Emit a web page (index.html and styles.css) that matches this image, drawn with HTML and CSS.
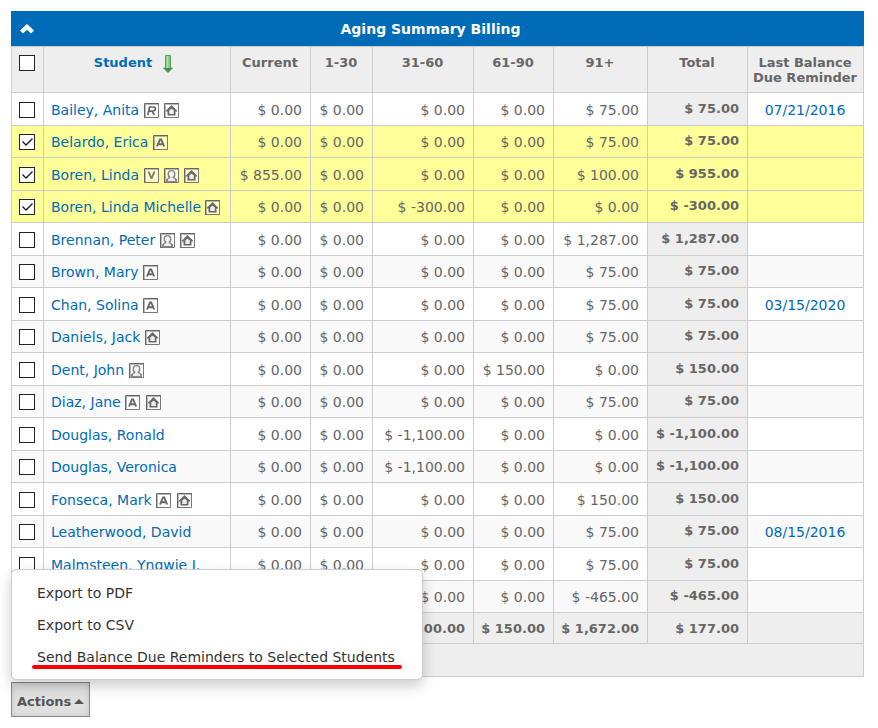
FILE: index.html
```html
<!DOCTYPE html>
<html lang="en">
<head>
<meta charset="utf-8">
<title>Aging Summary Billing</title>
<link rel="stylesheet" href="styles.css">
</head>
<body>
<svg class="symbols" aria-hidden="true">
  <symbol id="frame" viewBox="0 0 15 15">
    <path fill="#fff" fill-opacity=".45" d="M1 1h13v13H1z"/>
    <path fill="none" stroke="#666" d="M.5 15V.5H15"/>
    <path fill="none" stroke="#777" d="M14.500 1v13.500H1"/>
    <path fill="none" stroke="#888" stroke-opacity=".6" d="M1.500 14V1.500H14"/>
  </symbol>
  <symbol id="a" viewBox="0 0 15 15">
    <use href="#frame"/>
    <path fill="none" stroke="#666" stroke-width="1.900" d="M4 11.500 7 4.500h1.200l3 7M5.200 9.300h4.800"/>
  </symbol>
  <symbol id="r" viewBox="0 0 15 15">
    <use href="#frame"/>
    <path fill="none" stroke="#666" stroke-width="1.700" d="M3.800 12 5.600 4h4q2 0 1.700 2T8.800 8.200H5M8 8.200 10.500 12"/>
  </symbol>
  <symbol id="v" viewBox="0 0 15 15">
    <use href="#frame"/>
    <path fill="none" stroke="#777" stroke-width="1.900" d="M4.500 3.500 7.200 9.800h.6l2.700-6.300"/>
  </symbol>
  <symbol id="person" viewBox="0 0 15 15">
    <use href="#frame"/>
    <path fill="#888" d="M7.500 2Q11.500 2 11.500 6q0 2-1 3.500l2.500 1.800V14h-11v-2.700l2.500-1.800Q3.500 8 3.500 6 3.500 2 7.500 2z"/>
    <ellipse cx="7.500" cy="6" rx="2.500" ry="2.800" fill="#f2f2f2"/>
    <path fill="#ececec" d="M6.300 8h2.400v2l2.300 1.300V13H4v-1.700L6.300 10z"/>
  </symbol>
  <symbol id="home" viewBox="0 0 15 15">
    <use href="#frame"/>
    <path fill="#686868" d="M7.500 2 13 7.500v1h-1.500v4h-8v-4H2v-1z"/>
    <path fill="#eee" d="M5.300 7.200 7.500 5.800l2.300 1.400V11H5.300z"/>
  </symbol>
</svg>

<main class="report">
  <header class="report-bar">
    <button class="collapse" type="button" aria-label="Collapse">
      <svg viewBox="0 0 14 10" width="14" height="10" aria-hidden="true"><path fill="#fff" d="M7 0 14 6.500 11 9.500 7 5.800 3 9.500 0 6.500z"/></svg>
    </button>
    <h1>Aging Summary Billing</h1>
  </header>

  <table class="aging">
    <colgroup>
      <col class="c-check"><col><col class="c-current"><col class="c-30"><col class="c-60"><col class="c-90"><col class="c-91"><col class="c-total"><col class="c-last">
    </colgroup>
    <thead>
      <tr>
        <th><input type="checkbox" aria-label="Select all"></th>
        <th><a class="sort" href="#">Student
          <svg viewBox="0 0 10 18" width="10" height="18" aria-hidden="true"><path fill="#83c57e" stroke="#58a35a" d="M2.500.5h5v12.500h2L5 17.500.5 13h2z"/><path stroke="#b5dfae" stroke-width="1.500" d="M4.500 1v12"/><path fill="#438c4b" d="M1 13h8l-4 4.500z"/></svg></a></th>
        <th>Current</th><th>1-30</th><th>31-60</th><th>61-90</th><th>91+</th><th>Total</th><th>Last Balance Due Reminder</th>
      </tr>
    </thead>
    <tbody>
      <tr><td><input type="checkbox" aria-label="Select Bailey, Anita"></td><td><a href="#">Bailey, Anita</a> <svg class="tag"><use href="#r"/></svg> <svg class="tag"><use href="#home"/></svg></td><td>$ 0.00</td><td>$ 0.00</td><td>$ 0.00</td><td>$ 0.00</td><td>$ 75.00</td><td>$ 75.00</td><td><a href="#">07/21/2016</a></td></tr>
      <tr class="selected"><td><input type="checkbox" checked aria-label="Select Belardo, Erica"></td><td><a href="#">Belardo, Erica</a> <svg class="tag"><use href="#a"/></svg></td><td>$ 0.00</td><td>$ 0.00</td><td>$ 0.00</td><td>$ 0.00</td><td>$ 75.00</td><td>$ 75.00</td><td></td></tr>
      <tr class="selected"><td><input type="checkbox" checked aria-label="Select Boren, Linda"></td><td><a href="#">Boren, Linda</a> <svg class="tag"><use href="#v"/></svg> <svg class="tag"><use href="#person"/></svg> <svg class="tag"><use href="#home"/></svg></td><td>$ 855.00</td><td>$ 0.00</td><td>$ 0.00</td><td>$ 0.00</td><td>$ 100.00</td><td>$ 955.00</td><td></td></tr>
      <tr class="selected"><td><input type="checkbox" checked aria-label="Select Boren, Linda Michelle"></td><td><a href="#">Boren, Linda Michelle</a> <svg class="tag"><use href="#home"/></svg></td><td>$ 0.00</td><td>$ 0.00</td><td>$ -300.00</td><td>$ 0.00</td><td>$ 0.00</td><td>$ -300.00</td><td></td></tr>
      <tr><td><input type="checkbox" aria-label="Select Brennan, Peter"></td><td><a href="#">Brennan, Peter</a> <svg class="tag"><use href="#person"/></svg> <svg class="tag"><use href="#home"/></svg></td><td>$ 0.00</td><td>$ 0.00</td><td>$ 0.00</td><td>$ 0.00</td><td>$ 1,287.00</td><td>$ 1,287.00</td><td></td></tr>
      <tr><td><input type="checkbox" aria-label="Select Brown, Mary"></td><td><a href="#">Brown, Mary</a> <svg class="tag"><use href="#a"/></svg></td><td>$ 0.00</td><td>$ 0.00</td><td>$ 0.00</td><td>$ 0.00</td><td>$ 75.00</td><td>$ 75.00</td><td></td></tr>
      <tr><td><input type="checkbox" aria-label="Select Chan, Solina"></td><td><a href="#">Chan, Solina</a> <svg class="tag"><use href="#a"/></svg></td><td>$ 0.00</td><td>$ 0.00</td><td>$ 0.00</td><td>$ 0.00</td><td>$ 75.00</td><td>$ 75.00</td><td><a href="#">03/15/2020</a></td></tr>
      <tr><td><input type="checkbox" aria-label="Select Daniels, Jack"></td><td><a href="#">Daniels, Jack</a> <svg class="tag"><use href="#home"/></svg></td><td>$ 0.00</td><td>$ 0.00</td><td>$ 0.00</td><td>$ 0.00</td><td>$ 75.00</td><td>$ 75.00</td><td></td></tr>
      <tr><td><input type="checkbox" aria-label="Select Dent, John"></td><td><a href="#">Dent, John</a> <svg class="tag"><use href="#person"/></svg></td><td>$ 0.00</td><td>$ 0.00</td><td>$ 0.00</td><td>$ 150.00</td><td>$ 0.00</td><td>$ 150.00</td><td></td></tr>
      <tr><td><input type="checkbox" aria-label="Select Diaz, Jane"></td><td><a href="#">Diaz, Jane</a> <svg class="tag"><use href="#a"/></svg> <svg class="tag"><use href="#home"/></svg></td><td>$ 0.00</td><td>$ 0.00</td><td>$ 0.00</td><td>$ 0.00</td><td>$ 75.00</td><td>$ 75.00</td><td></td></tr>
      <tr><td><input type="checkbox" aria-label="Select Douglas, Ronald"></td><td><a href="#">Douglas, Ronald</a></td><td>$ 0.00</td><td>$ 0.00</td><td>$ -1,100.00</td><td>$ 0.00</td><td>$ 0.00</td><td>$ -1,100.00</td><td></td></tr>
      <tr><td><input type="checkbox" aria-label="Select Douglas, Veronica"></td><td><a href="#">Douglas, Veronica</a></td><td>$ 0.00</td><td>$ 0.00</td><td>$ -1,100.00</td><td>$ 0.00</td><td>$ 0.00</td><td>$ -1,100.00</td><td></td></tr>
      <tr><td><input type="checkbox" aria-label="Select Fonseca, Mark"></td><td><a href="#">Fonseca, Mark</a> <svg class="tag"><use href="#a"/></svg> <svg class="tag"><use href="#home"/></svg></td><td>$ 0.00</td><td>$ 0.00</td><td>$ 0.00</td><td>$ 0.00</td><td>$ 150.00</td><td>$ 150.00</td><td></td></tr>
      <tr><td><input type="checkbox" aria-label="Select Leatherwood, David"></td><td><a href="#">Leatherwood, David</a></td><td>$ 0.00</td><td>$ 0.00</td><td>$ 0.00</td><td>$ 0.00</td><td>$ 75.00</td><td>$ 75.00</td><td><a href="#">08/15/2016</a></td></tr>
      <tr><td><input type="checkbox" aria-label="Select Malmsteen, Yngwie J."></td><td><a href="#">Malmsteen, Yngwie J.</a></td><td>$ 0.00</td><td>$ 0.00</td><td>$ 0.00</td><td>$ 0.00</td><td>$ 75.00</td><td>$ 75.00</td><td></td></tr>
      <tr><td></td><td></td><td></td><td></td><td>$ 0.00</td><td>$ 0.00</td><td>$ -465.00</td><td>$ -465.00</td><td></td></tr>
    </tbody>
    <tfoot>
      <tr class="sums"><td></td><td></td><td></td><td></td><td>$ -2,500.00</td><td>$ 150.00</td><td>$ 1,672.00</td><td>$ 177.00</td><td></td></tr>
      <tr class="pager"><td colspan="9"></td></tr>
    </tfoot>
  </table>

  <div class="actions">
    <div class="menu">
      <button type="button">Export to PDF</button>
      <button type="button">Export to CSV</button>
      <button class="marked" type="button">Send Balance Due Reminders to Selected Students</button>
    </div>
    <button class="actions-button" type="button">Actions <svg viewBox="0 0 10 5" width="10" height="5" aria-hidden="true"><path fill="#555" d="M5 0 10 5H0z"/></svg></button>
  </div>
</main>
</body>
</html>
```

FILE: styles.css
```css
* { box-sizing: border-box; }

body {
  margin: 0;
  padding: 11px 14px 11px 11px;
  background: #fff;
  color: #666;
  font: 14px/18px Verdana, "DejaVu Sans", sans-serif;
}

a { color: #006bb6; text-decoration: none; }
button { font: inherit; cursor: pointer; }

.symbols { position: absolute; width: 0; height: 0; }

.report-bar {
  display: grid;
  grid-template-columns: 32px 1fr 46px;
  align-items: center;
  height: 35px;
  background: #006bb6;
  color: #fff;
}

.report-bar h1 {
  margin: 0;
  font-size: 14px;
  text-align: center;
}

.collapse {
  display: flex;
  padding: 0 0 0 9px;
  border: 0;
  background: none;
}

.aging {
  width: 100%;
  table-layout: fixed;
  border-collapse: separate;
  border-spacing: 0;
  border: solid #ccc;
  border-width: 1px 0 0 1px;
}

.c-check { width: 32px; }
.c-current, .c-90 { width: 80px; }
.c-30 { width: 62px; }
.c-60 { width: 101px; }
.c-91 { width: 94px; }
.c-total { width: 100px; }
.c-last { width: 116px; }

th, td {
  border: solid #ccc;
  border-width: 0 1px 1px 0;
  vertical-align: top;
  white-space: nowrap;
}

th {
  height: 46px;
  padding: 8px 5px 0 4px;
  background: #eee;
  font-size: 13px;
  line-height: 15px;
}

th:last-child { white-space: normal; }

.sort {
  display: flex;
  justify-content: center;
  gap: 11px;
  padding-right: 6px;
}

td {
  height: 32px;
  padding: 7px 8px 0 7px;
  text-align: right;
}

tbody tr:nth-child(odd) td { height: 33px; padding-top: 8px; }
tbody tr:nth-child(even) td { background: #f9f9f9; }

td:first-child, th:first-child { padding-left: 7px; text-align: left; }
td:nth-child(2) { text-align: left; }
td:last-child { text-align: center; }

tbody tr td:nth-child(8) {
  background: #eee;
  font-size: 13px;
  font-weight: bold;
  line-height: 16px;
}

tbody tr.selected td { background: #ff9; }

.sums td {
  height: 31px;
  padding-top: 8px;
  background: #eee;
  font-size: 13px;
  font-weight: bold;
  line-height: 16px;
}

.pager td { height: 33px; background: #eee; }

input[type="checkbox"] {
  appearance: none;
  display: block;
  width: 16px;
  height: 16px;
  margin: 1px 0 0;
  border: 1px solid #222;
  background: #fff;
}

th input[type="checkbox"] { margin: 0; }

input[type="checkbox"]:checked::after {
  content: "";
  display: block;
  width: 14px;
  height: 14px;
  background: #222;
  clip-path: polygon(2px 7px, 3px 6px, 6px 9px, 12px 3px, 13px 4px, 6px 11px);
}

.tag {
  width: 15px;
  height: 15px;
  vertical-align: -3px;
}

.tag + .tag { margin-left: 1px; }

.actions {
  position: relative;
  margin-top: 5px;
}

.menu {
  position: absolute;
  left: 0;
  bottom: 100%;
  display: flex;
  flex-direction: column;
  width: 412px;
  margin-bottom: 2px;
  padding: 7px 0 6px;
  border: 1px solid #ccc;
  border-radius: 5px;
  background: #fff;
  box-shadow: 0 6px 14px rgba(0, 0, 0, 0.2);
}

.menu button {
  position: relative;
  height: 32px;
  padding: 0 25px;
  border: 0;
  background: none;
  color: #333;
  text-align: left;
  white-space: nowrap;
}

.marked::after {
  content: "";
  position: absolute;
  left: 20px;
  right: 20px;
  bottom: 4px;
  height: 4px;
  border-radius: 2px;
  background: #f00;
}

.actions-button {
  display: flex;
  align-items: center;
  gap: 3px;
  height: 35px;
  padding: 4px 5px 0;
  border: 1px solid #888;
  background: #e0e0e0;
  box-shadow: inset 0 0 6px rgba(0, 0, 0, 0.12);
  color: #555;
  font-size: 13px;
  font-weight: bold;
}
```
